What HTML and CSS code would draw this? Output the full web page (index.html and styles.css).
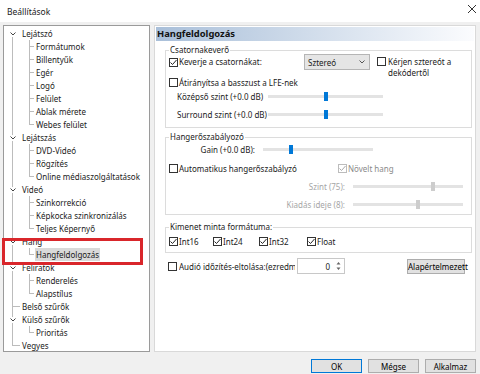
FILE: index.html
```html
<!DOCTYPE html>
<html lang="hu">
<head>
    <meta charset="UTF-8">
    <title>Beállítások</title>
    <link rel="stylesheet" href="styles.css">
</head>
<body>
<div class="window">
    <div class="titlebar">
        <span class="title">Beállítások</span>
        <svg class="close" width="8" height="8" viewBox="0 0 8 8"><path d="M0 0L8 8M8 0L0 8" stroke="#333" stroke-width="1"/></svg>
    </div>

    <div class="main">
        <!-- Settings tree -->
        <div class="tree-wrap">
            <ul class="tree">
                <li>
                    <div class="node"><span class="toggle"><svg class="chev" width="6" height="6" viewBox="0 0 6 6"><rect width="6" height="6" fill="#fff"/><path d="M0.5 1.5L3 4L5.5 1.5" fill="none" stroke="#444"/></svg></span>Lejátszó</div>
                    <ul class="sub">
                        <li>Formátumok</li>
                        <li>Billentyűk</li>
                        <li>Egér</li>
                        <li>Logó</li>
                        <li>Felület</li>
                        <li>Ablak mérete</li>
                        <li>Webes felület</li>
                    </ul>
                </li>
                <li>
                    <div class="node"><span class="toggle"><svg class="chev" width="6" height="6" viewBox="0 0 6 6"><rect width="6" height="6" fill="#fff"/><path d="M0.5 1.5L3 4L5.5 1.5" fill="none" stroke="#444"/></svg></span>Lejátszás</div>
                    <ul class="sub">
                        <li>DVD-Videó</li>
                        <li>Rögzítés</li>
                        <li>Online médiaszolgáltatások</li>
                    </ul>
                </li>
                <li>
                    <div class="node"><span class="toggle"><svg class="chev" width="6" height="6" viewBox="0 0 6 6"><rect width="6" height="6" fill="#fff"/><path d="M0.5 1.5L3 4L5.5 1.5" fill="none" stroke="#444"/></svg></span>Videó</div>
                    <ul class="sub">
                        <li>Szinkorrekció</li>
                        <li>Képkocka szinkronizálás</li>
                        <li>Teljes Képernyő</li>
                    </ul>
                </li>
                <li>
                    <div class="node"><span class="toggle"><svg class="chev" width="6" height="6" viewBox="0 0 6 6"><rect width="6" height="6" fill="#fff"/><path d="M0.5 1.5L3 4L5.5 1.5" fill="none" stroke="#444"/></svg></span>Hang</div>
                    <ul class="sub">
                        <li class="selected"><span>Hangfeldolgozás</span></li>
                    </ul>
                </li>
                <li>
                    <div class="node"><span class="toggle"><svg class="chev" width="6" height="6" viewBox="0 0 6 6"><rect width="6" height="6" fill="#fff"/><path d="M0.5 1.5L3 4L5.5 1.5" fill="none" stroke="#444"/></svg></span>Feliratok</div>
                    <ul class="sub">
                        <li>Renderelés</li>
                        <li>Alapstílus</li>
                    </ul>
                </li>
                <li>
                    <div class="node"><span class="toggle"><span class="tick"></span></span>Belső szűrők</div>
                </li>
                <li>
                    <div class="node"><span class="toggle"><svg class="chev" width="6" height="6" viewBox="0 0 6 6"><rect width="6" height="6" fill="#fff"/><path d="M0.5 1.5L3 4L5.5 1.5" fill="none" stroke="#444"/></svg></span>Külső szűrők</div>
                    <ul class="sub">
                        <li>Prioritás</li>
                    </ul>
                </li>
                <li>
                    <div class="node"><span class="toggle"><span class="tick"></span></span>Vegyes</div>
                </li>
            </ul>
            <div class="highlight"></div>
        </div>

        <!-- Audio processing page -->
        <div class="panel">
            <div class="panel-head">Hangfeldolgozás</div>

            <fieldset class="group">
                <legend>Csatornakeverő</legend>
                <div class="mix-top">
                    <div class="check">
                        <span class="box"><svg width="7" height="7" viewBox="0 0 7 7"><path d="M0.5 3.5L2.5 5.5L6.5 1" fill="none" stroke="#222"/></svg></span>
                        <span>Keverje a csatornákat:</span>
                    </div>
                    <div class="select">
                        <span>Sztereó</span>
                        <svg width="6" height="4" viewBox="0 0 6 4"><path d="M0.5 0.5L3 3L5.5 0.5" fill="none" stroke="#555"/></svg>
                    </div>
                    <div class="check multi">
                        <span class="box"></span>
                        <span>Kérjen sztereót a<br>dekódertől</span>
                    </div>
                </div>
                <div class="row">
                    <div class="check">
                        <span class="box"></span>
                        <span>Átirányítsa a basszust a LFE-nek</span>
                    </div>
                </div>
                <div class="row">
                    <span class="slider-label">Középső szint (+0.0 dB)</span>
                    <div class="track wide"><span class="thumb" style="left: 49%"></span></div>
                </div>
                <div class="row spaced">
                    <span class="slider-label">Surround szint (+0.0 dB)</span>
                    <div class="track wide"><span class="thumb" style="left: 49%"></span></div>
                </div>
            </fieldset>

            <fieldset class="group volume">
                <legend>Hangerőszabályozó</legend>
                <div class="row gain">
                    <span class="slider-label right">Gain (+0.0 dB):</span>
                    <div class="track"><span class="thumb" style="left: 24%"></span></div>
                </div>
                <div class="row auto">
                    <div class="check">
                        <span class="box"></span>
                        <span>Automatikus hangerőszabályzó</span>
                    </div>
                    <div class="check disabled">
                        <span class="box"><svg width="7" height="7" viewBox="0 0 7 7"><path d="M0.5 3.5L2.5 5.5L6.5 1" fill="none" stroke="#a8a8a8"/></svg></span>
                        <span>Növelt hang</span>
                    </div>
                </div>
                <div class="row spaced">
                    <span class="slider-label right long disabled">Szint (75):</span>
                    <div class="track"><span class="thumb off" style="left: 71%"></span></div>
                </div>
                <div class="row spaced">
                    <span class="slider-label right long disabled">Kiadás ideje (8):</span>
                    <div class="track"><span class="thumb off" style="left: 57%"></span></div>
                </div>
            </fieldset>

            <fieldset class="group formats">
                <legend>Kimenet minta formátuma:</legend>
                <div class="row">
                    <div class="check fmt">
                        <span class="box"><svg width="7" height="7" viewBox="0 0 7 7"><path d="M0.5 3.5L2.5 5.5L6.5 1" fill="none" stroke="#222"/></svg></span>
                        <span>Int16</span>
                    </div>
                    <div class="check fmt">
                        <span class="box"><svg width="7" height="7" viewBox="0 0 7 7"><path d="M0.5 3.5L2.5 5.5L6.5 1" fill="none" stroke="#222"/></svg></span>
                        <span>Int24</span>
                    </div>
                    <div class="check fmt wide">
                        <span class="box"><svg width="7" height="7" viewBox="0 0 7 7"><path d="M0.5 3.5L2.5 5.5L6.5 1" fill="none" stroke="#222"/></svg></span>
                        <span>Int32</span>
                    </div>
                    <div class="check">
                        <span class="box"><svg width="7" height="7" viewBox="0 0 7 7"><path d="M0.5 3.5L2.5 5.5L6.5 1" fill="none" stroke="#222"/></svg></span>
                        <span>Float</span>
                    </div>
                </div>
            </fieldset>

            <div class="audio-row">
                <span class="box"></span>
                <span class="audio-label">Audió időzítés-eltolása:(ezredmp)</span>
                <div class="spin">
                    <span class="spin-value">0</span>
                    <svg class="spin-arrows" width="9" height="14" viewBox="0 0 9 14"><path d="M4.5 3L6.5 5.5H2.5Z M4.5 11L6.5 8.5H2.5Z" fill="#666"/></svg>
                </div>
                <button class="btn reset">Alapértelmezett</button>
            </div>
        </div>
    </div>

    <div class="footer">
        <button class="btn default">OK</button>
        <button class="btn">Mégse</button>
        <button class="btn">Alkalmaz</button>
    </div>
</div>
</body>
</html>
```

FILE: styles.css
```css
body {
    margin: 0;
    font-family: "Noto Sans", "DejaVu Sans", sans-serif;
    font-size: 8px;
    color: #1a1a1a;
    background: #f0f0f0;
}

.window {
    width: 480px;
    height: 374px;
    display: flex;
    flex-direction: column;
}

.titlebar {
    height: 22px;
    flex: none;
    background: #fff;
    display: flex;
    align-items: center;
    justify-content: space-between;
    padding: 0 4px 0 7px;
}

.title {
    font-size: 8.5px;
}

.close {
    margin-top: -4px;
}

.main {
    display: flex;
    gap: 4px;
    height: 327px;
    padding: 3px 4px 0 3px;
}

/* tree */

.tree-wrap {
    position: relative;
    width: 147px;
    box-sizing: border-box;
    border: 1px solid #9a9a9a;
    background: #fff;
}

.tree, .sub {
    list-style: none;
    margin: 0;
    padding: 0;
    position: relative;
}

.tree {
    padding-top: 1px;
}

.tree::before {
    content: "";
    position: absolute;
    left: 8px;
    top: 8px;
    bottom: 6px;
    border-left: 1px solid #bcbcbc;
}

.node {
    display: flex;
    align-items: center;
    height: 13px;
    position: relative;
}

.toggle {
    width: 18px;
    flex: none;
    display: flex;
    align-items: center;
}

.chev {
    margin-left: 6px;
}

.tick {
    width: 7px;
    margin-left: 9px;
    border-top: 1px solid #bcbcbc;
}

.sub::before {
    content: "";
    position: absolute;
    left: 25px;
    top: 0;
    bottom: 6px;
    border-left: 1px solid #bcbcbc;
}

.sub li {
    position: relative;
    height: 13px;
    line-height: 13px;
    padding-left: 32px;
    white-space: nowrap;
}

.sub li::before {
    content: "";
    position: absolute;
    left: 25px;
    top: 6px;
    width: 5px;
    border-top: 1px solid #bcbcbc;
}

.sub li.selected span {
    background: #d9d9d9;
    padding: 1px 1px;
    margin-left: -1px;
}

.highlight {
    position: absolute;
    left: -2px;
    top: 212px;
    width: 141px;
    height: 27px;
    box-sizing: border-box;
    border: 3px solid #d9262b;
}

/* page */

.panel {
    width: 322px;
    box-sizing: border-box;
    border: 1px solid #d9d9d9;
    background: #fff;
    padding: 1px;
    display: flex;
    flex-direction: column;
}

.panel-head {
    height: 14px;
    line-height: 14px;
    padding-left: 1px;
    font-weight: bold;
    font-size: 9.4px;
    color: #111;
    background: linear-gradient(to right, #a9bfd9, #fbfcfe);
}

.group {
    margin: 3px 2px 0 9px;
    padding: 0 3px 6px 3px;
    border: 1px solid #dcdcdc;
    min-width: 0;
}

.group legend {
    padding: 0 1px;
    line-height: 12px;
    color: #222;
}

.volume {
    padding-bottom: 3px;
}

.formats {
    margin-top: 6px;
    padding-bottom: 4px;
}

.row {
    display: flex;
    align-items: center;
    height: 14px;
}

.row.spaced {
    margin-top: 4px;
}

.check {
    display: flex;
    align-items: center;
    gap: 1px;
    white-space: nowrap;
}

.box {
    width: 9px;
    height: 9px;
    box-sizing: border-box;
    border: 1px solid #333;
    background: #fff;
    flex: none;
    display: flex;
    align-items: center;
    justify-content: center;
}

.disabled {
    color: #8a8a8a;
}

.check.disabled .box {
    border-color: #bcbcbc;
}

.mix-top {
    display: grid;
    grid-template-columns: 128px 66px auto;
    column-gap: 7px;
    align-items: start;
    height: 21px;
    margin-top: -2px;
}

.mix-top .check {
    margin-top: 2px;
    line-height: 12px;
}

.check.multi {
    align-items: flex-start;
    line-height: 11px;
    gap: 2px;
}

.check.multi .box {
    margin-top: 1px;
}

.select {
    height: 16px;
    box-sizing: border-box;
    border: 1px solid #b5b5b5;
    background: #e5e5e5;
    display: flex;
    align-items: center;
    justify-content: space-between;
    padding: 0 4px 0 3px;
}

.slider-label {
    width: 99px;
    flex: none;
    padding-left: 8px;
    box-sizing: border-box;
    white-space: nowrap;
    color: #222;
}

.slider-label.right {
    width: 86px;
    padding: 0;
    margin-right: 8px;
    text-align: right;
}

.slider-label.long {
    width: 176px;
    color: #a6a6a6;
}

.track {
    position: relative;
    width: 110px;
    height: 3px;
    background: #e3e3e3;
}

.track.wide {
    width: 115px;
}

.thumb {
    position: absolute;
    top: -3px;
    width: 4px;
    height: 9px;
    background: #0078d7;
}

.thumb.off {
    background: #cdcdcd;
}

.gain {
    height: 12px;
}

.auto {
    margin-top: 6px;
    display: grid;
    grid-template-columns: 169px auto;
}

.formats .row {
    margin-top: 1px;
}

.fmt {
    width: 44px;
}

.fmt + .fmt {
    width: 46px;
}

.fmt.wide {
    width: 48px;
}

/* offset row */

.audio-row {
    display: flex;
    align-items: center;
    height: 16px;
    margin-top: 5px;
    padding-left: 12px;
}

.audio-label {
    width: 116px;
    margin: 0 2px;
    overflow: hidden;
    white-space: nowrap;
}

.spin {
    display: flex;
    align-items: center;
    width: 48px;
    height: 16px;
    box-sizing: border-box;
    border: 1px solid #c8c8c8;
}

.spin-value {
    flex: 1;
    text-align: right;
    padding-right: 4px;
}

.spin-arrows {
    margin-right: 1px;
}

.btn {
    width: 51px;
    height: 14px;
    box-sizing: border-box;
    border: 1px solid #adadad;
    background: #e1e1e1;
    font: inherit;
    color: #000;
    padding: 0;
}

.btn.default {
    border-color: #0078d7;
}

.btn.reset {
    width: 58px;
    height: 15px;
    margin-left: 62px;
}

.footer {
    display: flex;
    justify-content: flex-end;
    gap: 6px;
    padding: 7px 4px 0 0;
}
```
